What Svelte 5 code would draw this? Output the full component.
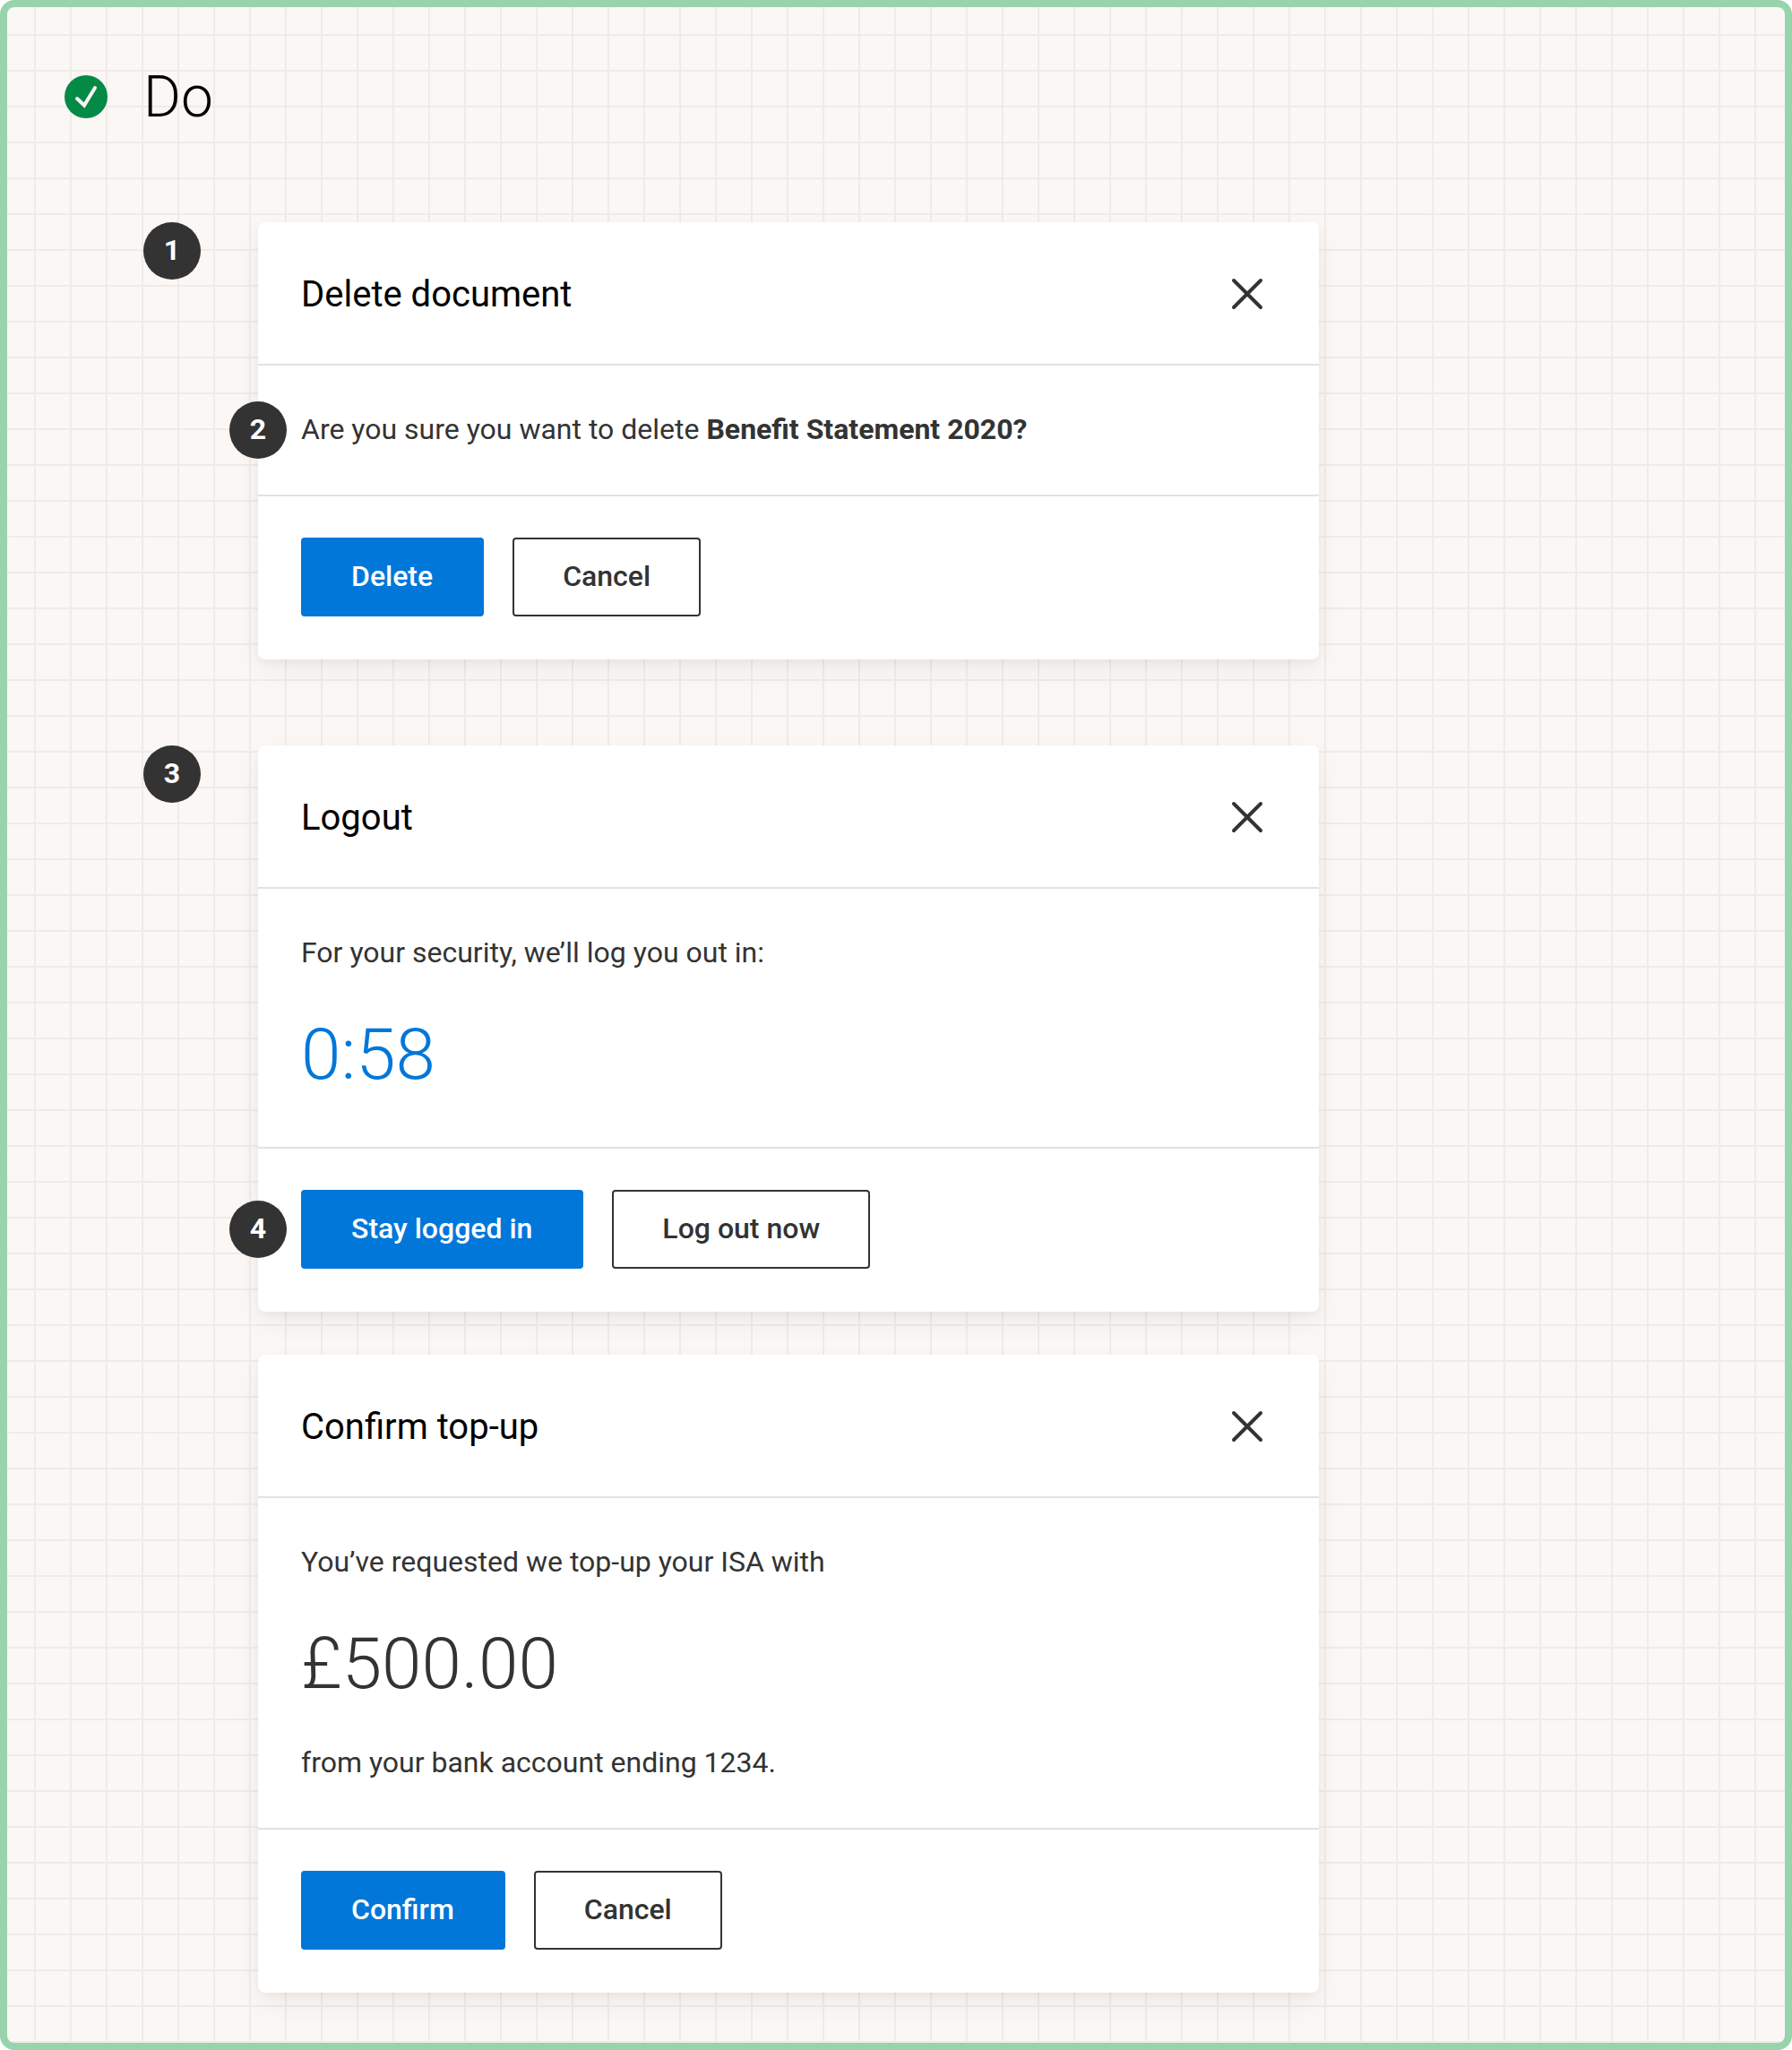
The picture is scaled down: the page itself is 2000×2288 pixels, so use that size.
<script>
  const dialogs = [
    {
      id: 'delete',
      marker: 1,
      title: 'Delete document',
      bodyMarker: 2,
      body: [{ kind: 'text', text: 'Are you sure you want to delete ', strong: 'Benefit Statement 2020?' }],
      primary: 'Delete',
      secondary: 'Cancel'
    },
    {
      id: 'logout',
      marker: 3,
      title: 'Logout',
      body: [
        { kind: 'text', text: 'For your security, we’ll log you out in:' },
        { kind: 'timer', text: '0:58' }
      ],
      footerMarker: 4,
      primary: 'Stay logged in',
      secondary: 'Log out now'
    },
    {
      id: 'topup',
      title: 'Confirm top-up',
      body: [
        { kind: 'text', text: 'You’ve requested we top-up your ISA with' },
        { kind: 'amount', text: '£500.00' },
        { kind: 'text', text: 'from your bank account ending 1234.' }
      ],
      primary: 'Confirm',
      secondary: 'Cancel'
    }
  ];
</script>

<main class="board">
  <header class="heading">
    <svg class="tick" viewBox="0 0 48 48" aria-hidden="true">
      <circle cx="24" cy="24" r="24" />
      <path d="M14 26l8 7.500L34 14" />
    </svg>
    <h1>Do</h1>
  </header>

  <div class="examples">
    {#each dialogs as dialog (dialog.id)}
      <div class="example" class:follow={!dialog.marker}>
        <div class="gutter">
          {#if dialog.marker}<span class="marker">{dialog.marker}</span>{/if}
        </div>
        <section class="card" role="dialog" aria-labelledby="{dialog.id}-title">
          <div class="card-header">
            <h2 id="{dialog.id}-title">{dialog.title}</h2>
            <button class="close" type="button" aria-label="Close">
              <svg viewBox="0 0 48 48" aria-hidden="true">
                <path d="M9 9l30 30M39 9L9 39" />
              </svg>
            </button>
          </div>
          <div class="card-body">
            {#if dialog.bodyMarker}<span class="marker pinned">{dialog.bodyMarker}</span>{/if}
            {#each dialog.body as line}
              <p class={line.kind}>{line.text}{#if line.strong}<strong>{line.strong}</strong>{/if}</p>
            {/each}
          </div>
          <div class="card-footer">
            {#if dialog.footerMarker}<span class="marker pinned">{dialog.footerMarker}</span>{/if}
            <button class="btn primary" type="button">{dialog.primary}</button>
            <button class="btn secondary" type="button">{dialog.secondary}</button>
          </div>
        </section>
      </div>
    {/each}
  </div>
</main>

<style>
  :global(body) {
    margin: 0;
    background: #fff;
  }

  .board {
    box-sizing: border-box;
    min-height: 100vh;
    padding: 60px 64px 56px;
    border: 8px solid #98d4ab;
    border-radius: 16px;
    background-color: #fbf7f4;
    background-image:
      linear-gradient(to right, transparent 38px, #efebe8 38px),
      linear-gradient(to bottom, transparent 38px, #efebe8 38px);
    background-size: 40px 40px;
    background-position: -8px -8px;
    color: #333;
    font-family: Roboto, 'Liberation Sans', sans-serif;
    font-size: 32px;
    line-height: 46px;
  }

  h1,
  h2,
  p {
    margin: 0;
  }

  .heading {
    display: flex;
    align-items: center;
    gap: 40px;
    margin-bottom: 100px;
  }

  .tick {
    width: 48px;
    height: 48px;
  }

  .tick circle {
    fill: #048a47;
  }

  .tick path {
    fill: none;
    stroke: #fbf7f4;
    stroke-width: 4;
    stroke-linecap: round;
  }

  h1 {
    padding-top: 2px;
    color: #000;
    font-size: 64px;
    font-weight: 300;
    line-height: 78px;
  }

  .examples {
    display: flex;
    flex-direction: column;
    gap: 96px;
    padding-left: 88px;
  }

  .example {
    display: flex;
    gap: 64px;
  }

  .follow {
    margin-top: -48px;
  }

  .gutter {
    flex: 0 0 64px;
  }

  .marker {
    display: flex;
    box-sizing: border-box;
    align-items: center;
    justify-content: center;
    width: 64px;
    height: 64px;
    padding-bottom: 2px;
    border-radius: 50%;
    background: #333;
    color: #fff;
    font-weight: 700;
  }

  .pinned {
    position: absolute;
    top: 50%;
    left: 0;
    transform: translate(-50%, -50%);
  }

  .card {
    flex: 1;
    max-width: 1184px;
    border-radius: 8px;
    background: #fff;
    box-shadow:
      0 4px 8px rgba(0, 0, 0, 0.04),
      0 12px 32px rgba(0, 0, 0, 0.05);
  }

  .card-header {
    display: flex;
    align-items: center;
    justify-content: space-between;
    padding: 48px 48px 46px;
    border-bottom: 2px solid #e2e2e2;
  }

  h2 {
    padding-top: 2px;
    color: #000;
    font-size: 40px;
    font-weight: 400;
    line-height: 62px;
  }

  .close {
    display: flex;
    padding: 8px;
    border: 0;
    background: none;
    cursor: pointer;
  }

  .close svg {
    width: 48px;
    height: 48px;
    fill: none;
    stroke: #333;
    stroke-width: 4;
    stroke-linecap: round;
  }

  .card-body {
    position: relative;
    display: flex;
    flex-direction: column;
    gap: 32px;
    padding: 48px;
  }

  .text {
    padding-bottom: 2px;
  }

  .timer,
  .amount {
    padding-top: 2px;
    font-size: 80px;
    font-weight: 300;
    line-height: 110px;
  }

  .timer {
    color: #0077d9;
  }

  strong {
    font-weight: 700;
  }

  .card-footer {
    position: relative;
    display: flex;
    gap: 32px;
    padding: 48px;
    box-shadow: inset 0 2px #e2e2e2;
  }

  .btn {
    box-sizing: border-box;
    height: 88px;
    padding: 0 54px 2px;
    border: 2px solid #333;
    border-radius: 4px;
    background: #fff;
    color: #333;
    font: inherit;
    font-weight: 500;
    cursor: pointer;
  }

  .primary {
    padding-right: 55px;
    border-color: #0077d9;
    background: #0077d9;
    color: #fff;
  }
</style>
